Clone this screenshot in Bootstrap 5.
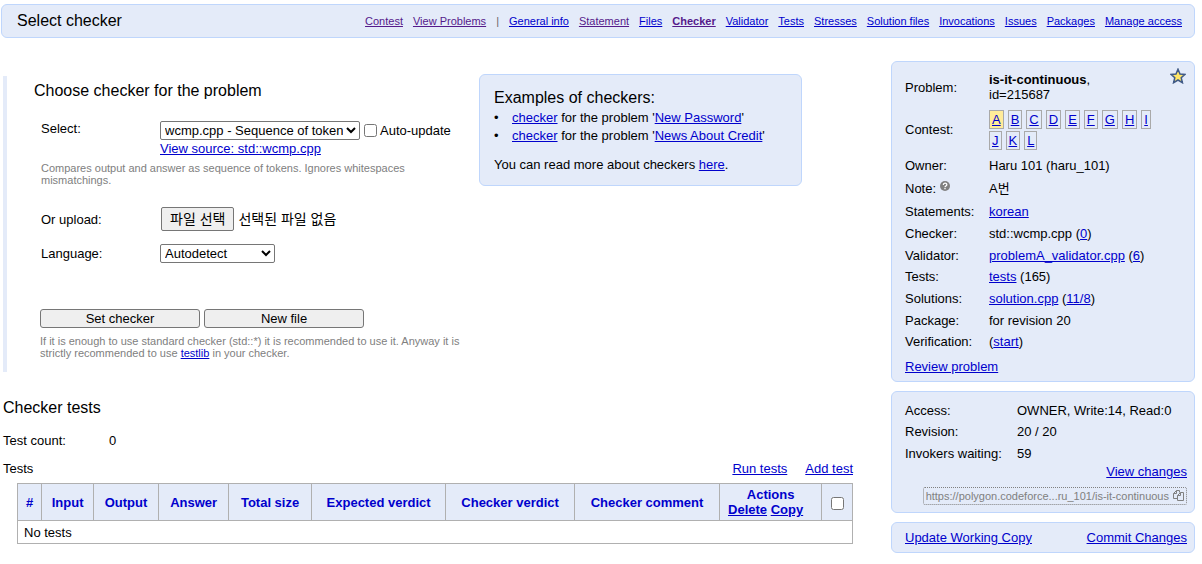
<!DOCTYPE html>
<html lang="en">
<head>
<meta charset="utf-8">
<meta name="viewport" content="width=device-width, initial-scale=1">
<title>Select checker</title>
<link href="https://cdn.jsdelivr.net/npm/bootstrap@5.3.0/dist/css/bootstrap.min.css" rel="stylesheet">
<style>
  body { font: 13px/15px "Liberation Sans", "Noto Sans CJK KR", sans-serif; color: #000; background: #fff; }
  a { color: #00c; }
  a.seen { color: #551a8b; }
  h1, h2, h3 { font-size: 16px; line-height: 20px; font-weight: 400; margin: 0; }
  .page { padding: 4px 7px 8px 1px; }
  .panel { background: #e4ebf9; border: 1px solid #bfd6fc; border-radius: 6px; }
  .topbar { min-height: 34px; padding: 0 12px 0 15px; }
  .menu { font-size: 11px; gap: 10px; }
  .menu .divider { color: #666; }
  .layout { gap: 38px; margin-top: 23px; }
  .work { min-width: 0; padding-left: 2px; }
  .chooser { margin-top: 15px; border-left: 4px solid #e4ebf9; padding: 5px 0 13px 27px; gap: 17px; }
  .chooser form { width: 428px; }
  .fields { padding: 20px 0 0 6px; }
  .field-label { width: 120px; padding-left: 1px; }
  .hint { font-size: 11px; line-height: 12px; color: #808080; padding-left: 1px; margin: 6px 0 0; }
  .actions + .hint { margin-top: 7px; padding-left: 0; }
  .source-link { display: block; margin-top: 1px; }
  .upload-row { margin-top: 21px; }
  .lang-row { margin-top: 13px; }
  .actions { margin-top: 46px; }
  select, .plain-btn { font-size: 13px; line-height: 15px; color: #000; border: 1px solid #767676; border-radius: 2px; }
  select { height: 19px; background: #fff; padding: 0; }
  #std { width: 200px; }
  #lang { width: 115px; }
  .plain-btn { background: #efefef; padding: 0 6px; }
  .wide-btn { width: 160px; height: 19px; border-radius: 3px; }
  .file-btn { height: 24px; padding: 0 8px; margin-left: 1px; }
  .file-btn, .file-name { font-size: 14px; }
  input[type=checkbox] { width: 13px; height: 13px; margin: 0; }
  .auto-label { margin-left: -1px; }
  .examples { width: 323px; margin-top: -7px; padding: 13px 14px; }
  .examples ul { margin: 1px 0 12px; line-height: 18px; }
  .examples li::before { content: "•"; display: inline-block; width: 18px; }
  .tests-title { margin: 26px 0 15px; }
  .count-label { width: 106px; }
  .tests-bar { margin: 13px 0 7px; }
  .tests-bar .links { gap: 18px; }
  table.grid { width: calc(100% - 14px); margin-left: 14px; table-layout: fixed; }
  table.grid th, table.grid td { border: 1px solid #b0b0b0; }
  table.grid th { height: 37px; background: #e4ebf9; color: #00c; text-align: center; }
  table.grid td { height: 23px; padding: 0 6px; }
  .bulk { padding-right: 10px; }
  .c1 { width: 2.9%; } .c2 { width: 6.2%; } .c3 { width: 7.8%; } .c4 { width: 8.4%; } .c5 { width: 9.9%; }
  .c6 { width: 16.1%; } .c7 { width: 15.4%; } .c8 { width: 17.4%; } .c9 { width: 12.2%; } .c10 { width: 3.7%; }
  .side { width: 304px; gap: 9px; }
  .side .panel { padding: 7px 7px 7px 13px; }
  .facts { width: 100%; table-layout: fixed; }
  .facts th { font-weight: 400; width: 84px; height: 22px; padding: 0; }
  .facts td { padding: 0; }
  .facts.access th { width: 112px; }
  .facts .tight th { height: 21px; }
  .facts .name-row th { height: 36px; }
  .facts .note-row th { height: 25px; }
  .letters { gap: 2px 4px; padding: 5px 34px 4px 0; }
  .letters a { border: 1px solid #a9a9a9; padding: 1px 2px; line-height: 16px; height: 19px; }
  .letters a.current { background: #ffeb99; }
  .review { display: inline-block; margin-top: 7px; }
  .star { top: 6px; right: 8px; }
  .repo { border: 1px dotted #808080; border-radius: 2px; color: #808080; font-size: 11px; height: 18px; padding: 0 2px; background: none; }
</style>
</head>
<body>
<div class="page">
  <header class="panel topbar d-flex justify-content-between align-items-center">
    <h1>Select checker</h1>
    <nav class="menu d-flex">
      <a class="seen" href="#">Contest</a><a class="seen" href="#">View Problems</a><span class="divider">|</span>
      <a href="#">General info</a><a class="seen" href="#">Statement</a><a href="#">Files</a>
      <a class="seen fw-bold" href="#">Checker</a><a href="#">Validator</a><a href="#">Tests</a>
      <a href="#">Stresses</a><a href="#">Solution files</a><a href="#">Invocations</a>
      <a href="#">Issues</a><a href="#">Packages</a><a href="#">Manage access</a>
    </nav>
  </header>

  <div class="layout d-flex align-items-start">
    <main class="work flex-grow-1">
      <section class="chooser d-flex align-items-start">
        <form>
          <h2>Choose checker for the problem</h2>
          <div class="fields">
            <div class="d-flex">
              <label class="field-label" for="std">Select:</label>
              <div>
                <div class="d-flex align-items-center gap-1">
                  <select id="std"><option>wcmp.cpp - Sequence of tokens</option></select>
                  <input type="checkbox" id="auto"><label class="auto-label" for="auto">Auto-update</label>
                </div>
                <a class="source-link" href="#">View source: std::wcmp.cpp</a>
              </div>
            </div>
            <p class="hint">Compares output and answer as sequence of tokens. Ignores whitespaces mismatchings.</p>
            <div class="upload-row d-flex align-items-center">
              <label class="field-label" for="upload">Or upload:</label>
              <button type="button" class="plain-btn file-btn me-1" onclick="document.getElementById('upload').click()">파일 선택</button>
              <span class="file-name">선택된 파일 없음</span>
              <input type="file" id="upload" class="d-none">
            </div>
            <div class="lang-row d-flex align-items-center">
              <label class="field-label" for="lang">Language:</label>
              <select id="lang"><option>Autodetect</option></select>
            </div>
            <div class="actions d-flex gap-1">
              <button type="submit" class="plain-btn wide-btn">Set checker</button>
              <button type="button" class="plain-btn wide-btn">New file</button>
            </div>
            <p class="hint">If it is enough to use standard checker (std::*) it is recommended to use it. Anyway it is strictly recommended to use <a href="#">testlib</a> in your checker.</p>
          </div>
        </form>
        <aside class="panel examples">
          <h3>Examples of checkers:</h3>
          <ul class="list-unstyled">
            <li><a href="#">checker</a> for the problem '<a href="#">New Password</a>'</li>
            <li><a href="#">checker</a> for the problem '<a href="#">News About Credit</a>'</li>
          </ul>
          <p class="mb-0">You can read more about checkers <a href="#">here</a>.</p>
        </aside>
      </section>

      <h2 class="tests-title">Checker tests</h2>
      <div class="d-flex"><span class="count-label">Test count:</span><span>0</span></div>
      <div class="tests-bar d-flex justify-content-between">
        <span>Tests</span>
        <span class="links d-flex"><a href="#">Run tests</a><a href="#">Add test</a></span>
      </div>
      <table class="grid">
        <thead><tr>
          <th class="c1">#</th><th class="c2">Input</th><th class="c3">Output</th><th class="c4">Answer</th>
          <th class="c5">Total size</th><th class="c6">Expected verdict</th><th class="c7">Checker verdict</th>
          <th class="c8">Checker comment</th>
          <th class="c9">Actions<div class="bulk"><a href="#">Delete</a> <a href="#">Copy</a></div></th>
          <th class="c10"><input type="checkbox" class="align-middle" aria-label="Select all tests"></th>
        </tr></thead>
        <tbody><tr><td colspan="10">No tests</td></tr></tbody>
      </table>
    </main>

    <aside class="side d-flex flex-column flex-shrink-0">
      <section class="panel position-relative">
        <svg class="star position-absolute" width="16" height="16" viewBox="0 0 16 16"><path d="M8 1.200 10 6l5 .4-3.800 3.300 1.200 5L8 12l-4.400 2.700 1.200-5L1 6.400 6 6z" fill="#ffe566" stroke="#405a86" stroke-width="1.500"/></svg>
        <table class="facts">
          <tr class="name-row"><th>Problem:</th><td><b>is-it-continuous</b>,<br>id=215687</td></tr>
          <tr><th>Contest:</th><td><div class="letters d-flex flex-wrap">
            <a class="current" href="#">A</a><a href="#">B</a><a href="#">C</a><a href="#">D</a><a href="#">E</a><a href="#">F</a><a href="#">G</a><a href="#">H</a><a href="#">I</a><a href="#">J</a><a href="#">K</a><a href="#">L</a>
          </div></td></tr>
          <tr><th>Owner:</th><td>Haru 101 (haru_101)</td></tr>
          <tr class="note-row"><th>Note: <svg class="align-top" width="10" height="10" viewBox="0 0 10 10"><circle cx="5" cy="5" r="5" fill="#808080"/><path d="M3.300 3.900c0-2.300 3.500-2.300 3.500-.2C6.800 5 5 4.900 5 6.200M5 7v1.200" fill="none" stroke="#fff" stroke-width="1.300"/></svg></th><td>A번</td></tr>
          <tr class="tight"><th>Statements:</th><td><a href="#">korean</a></td></tr>
          <tr><th>Checker:</th><td>std::wcmp.cpp (<a href="#">0</a>)</td></tr>
          <tr><th>Validator:</th><td><a href="#">problemA_validator.cpp</a> (<a href="#">6</a>)</td></tr>
          <tr class="tight"><th>Tests:</th><td><a href="#">tests</a> (165)</td></tr>
          <tr><th>Solutions:</th><td><a href="#">solution.cpp</a> (<a href="#">11/8</a>)</td></tr>
          <tr><th>Package:</th><td>for revision 20</td></tr>
          <tr class="tight"><th>Verification:</th><td>(<a href="#">start</a>)</td></tr>
        </table>
        <a class="review" href="#">Review problem</a>
      </section>
      <section class="panel">
        <table class="facts access">
          <tr><th>Access:</th><td>OWNER, Write:14, Read:0</td></tr>
          <tr class="tight"><th>Revision:</th><td>20 / 20</td></tr>
          <tr><th>Invokers waiting:</th><td>59</td></tr>
        </table>
        <div class="d-flex flex-column align-items-end">
          <a href="#">View changes</a>
          <button type="button" class="repo mt-2 d-flex align-items-center gap-1">https://polygon.codeforce...ru_101/is-it-continuous
            <svg width="11" height="12" viewBox="0 0 11 12" fill="none" stroke="#808080"><path d="M4.500 8.500h-4v-5l3-3h3v2M3.500.5v3h-3M4.500 5.500l3-3h3v8h-6zM7.500 2.500v3h-3"/></svg>
          </button>
        </div>
      </section>
      <section class="panel d-flex justify-content-between">
        <a href="#">Update Working Copy</a><a href="#">Commit Changes</a>
      </section>
    </aside>
  </div>
</div>
<script src="https://cdn.jsdelivr.net/npm/bootstrap@5.3.0/dist/js/bootstrap.bundle.min.js"></script>
</body>
</html>
